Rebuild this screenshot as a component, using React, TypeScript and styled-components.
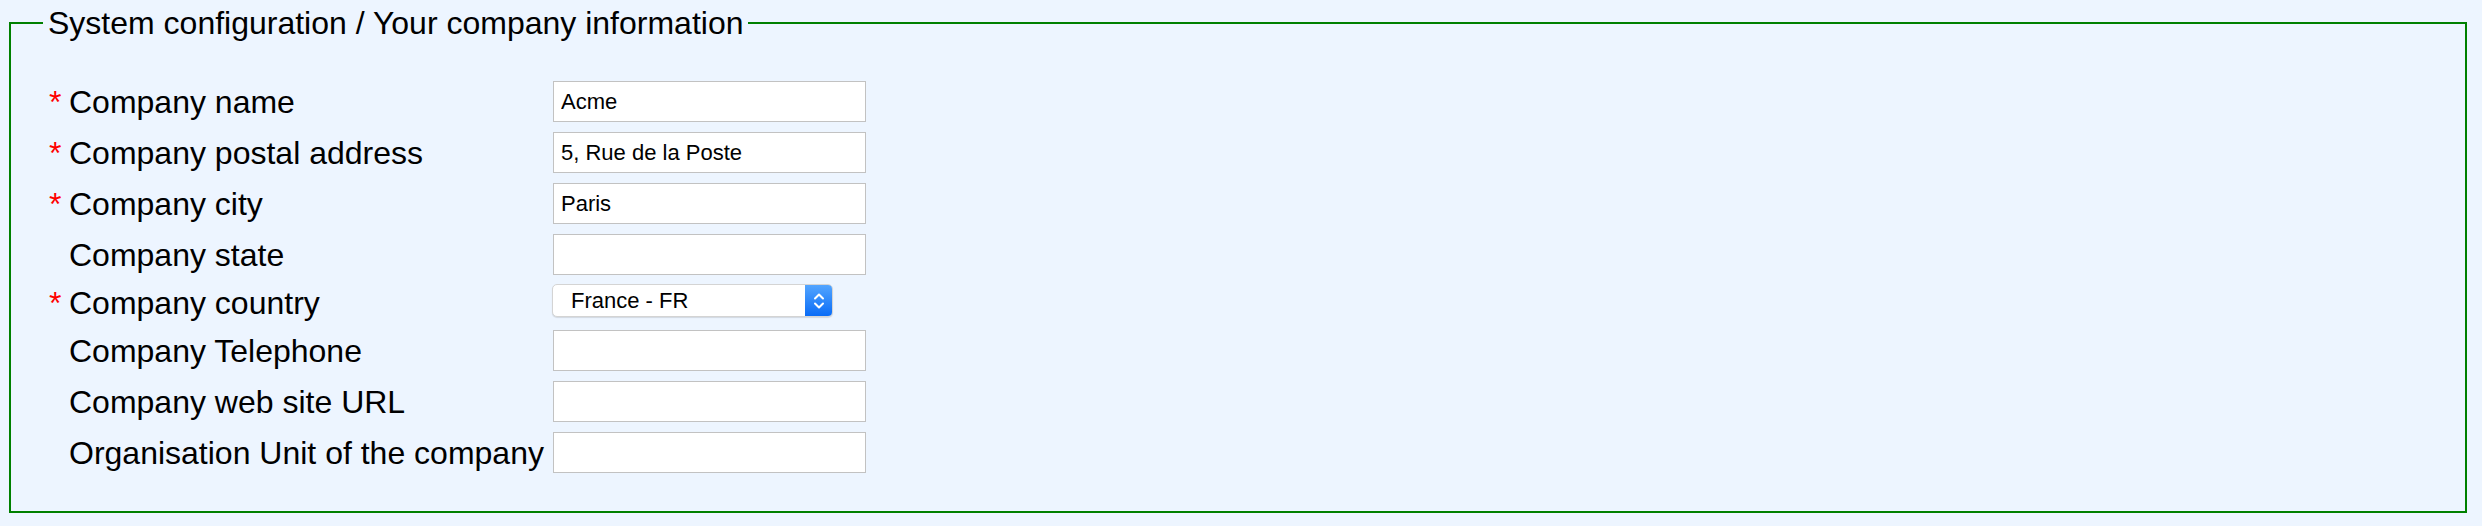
import React from 'react';
import styled, { createGlobalStyle } from 'styled-components';

const GlobalStyle = createGlobalStyle`
  html, body {
    margin: 0;
    padding: 0;
    background: #edf5ff;
  }
  body {
    font-family: "Liberation Sans", Arial, Helvetica, sans-serif;
    color: #000;
  }
`;

const Page = styled.div`
  padding: 5px 15px 13px 9px;
`;

const Fieldset = styled.fieldset`
  margin: 0;
  min-width: 0;
  border: 2px solid #008000;
  padding: 0 32px 33px 32px;
`;

const Legend = styled.legend`
  padding: 0 5px;
  font-size: 32px;
  line-height: 36px;
  color: #000;
`;

const RowList = styled.div`
  display: flex;
  flex-direction: column;
  padding: 35px 0 0 6px;
`;

const Row = styled.div<{ $compact?: boolean }>`
  display: grid;
  grid-template-columns: 504px 313px;
  align-items: center;
  height: ${(p) => (p.$compact ? 45 : 51)}px;
`;

const Label = styled.label`
  display: flex;
  align-items: center;
  font-size: 32px;
  line-height: 36px;
  white-space: nowrap;
`;

const Star = styled.span`
  display: inline-block;
  width: 20px;
  color: #f00;
`;

const TextInput = styled.input`
  box-sizing: border-box;
  width: 313px;
  height: 41px;
  margin: 0;
  padding: 0 7px;
  border: 1px solid #c2c2c2;
  border-radius: 0;
  background: #fff;
  font-family: "Liberation Sans", Arial, sans-serif;
  font-size: 22px;
  color: #000;
  outline: none;
`;

const SelectBox = styled.div`
  box-sizing: border-box;
  display: flex;
  width: 281px;
  height: 33px;
  margin: 0 0 4px -1px;
  border: 1px solid #d4d4d4;
  border-radius: 5px;
  background: #fff;
  box-shadow: 0 1px 1px rgba(0, 0, 0, 0.12);
  overflow: hidden;
`;

const NativeSelect = styled.select`
  flex: 1;
  min-width: 0;
  appearance: none;
  -webkit-appearance: none;
  border: none;
  margin: 0;
  padding: 0 0 0 18px;
  background: transparent;
  font-family: "Liberation Sans", Arial, sans-serif;
  font-size: 22px;
  color: #000;
  outline: none;
`;

const Stepper = styled.span`
  display: flex;
  align-items: center;
  justify-content: center;
  width: 27px;
  background: linear-gradient(#53a5ff, #0a6cf6);
`;

const Chevrons = () => (
  <svg width="14" height="22" viewBox="0 0 14 22" fill="none">
    <path d="M3 8.5 L7 4.5 L11 8.5" stroke="#fff" strokeWidth="2" strokeLinecap="round" strokeLinejoin="round" />
    <path d="M3 13.5 L7 17.5 L11 13.5" stroke="#fff" strokeWidth="2" strokeLinecap="round" strokeLinejoin="round" />
  </svg>
);

type Field = {
  label: string;
  required?: boolean;
  value?: string;
  select?: string;
};

const fields: Field[] = [
  { label: 'Company name', required: true, value: 'Acme' },
  { label: 'Company postal address', required: true, value: '5, Rue de la Poste' },
  { label: 'Company city', required: true, value: 'Paris' },
  { label: 'Company state', value: '' },
  { label: 'Company country', required: true, select: 'France - FR' },
  { label: 'Company Telephone', value: '' },
  { label: 'Company web site URL', value: '' },
  { label: 'Organisation Unit of the company', value: '' },
];

export default function App() {
  return (
    <>
      <GlobalStyle />
      <Page>
        <Fieldset>
          <Legend>System configuration / Your company information</Legend>
          <RowList>
            {fields.map((f) => (
              <Row key={f.label} $compact={!!f.select}>
                <Label>
                  <Star>{f.required ? '*' : ''}</Star>
                  {f.label}
                </Label>
                {f.select ? (
                  <SelectBox>
                    <NativeSelect defaultValue={f.select}>
                      <option>{f.select}</option>
                    </NativeSelect>
                    <Stepper>
                      <Chevrons />
                    </Stepper>
                  </SelectBox>
                ) : (
                  <TextInput type="text" defaultValue={f.value} />
                )}
              </Row>
            ))}
          </RowList>
        </Fieldset>
      </Page>
    </>
  );
}
